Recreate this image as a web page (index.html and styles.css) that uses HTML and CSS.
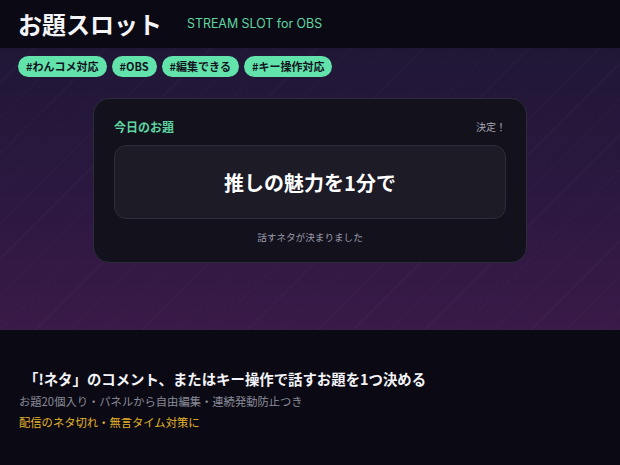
FILE: index.html
```html
<!DOCTYPE html>
<html lang="ja">
<head>
<meta charset="utf-8">
<link rel="stylesheet" href="styles.css">
</head>
<body>
<header class="top">
  <h1 class="title">お題スロット</h1>
  <span class="sub">STREAM SLOT for OBS</span>
</header>
<section class="stage">
  <div class="tags">
    <span class="tag">#わんコメ対応</span>
    <span class="tag">#OBS</span>
    <span class="tag">#編集できる</span>
    <span class="tag">#キー操作対応</span>
  </div>
  <div class="card">
    <div class="card-head">
      <span class="label">今日のお題</span>
      <span class="status">決定！</span>
    </div>
    <div class="result">推しの魅力を1分で</div>
    <div class="note">話すネタが決まりました</div>
  </div>
</section>
<section class="info">
  <h2 class="lead">「!ネタ」のコメント、またはキー操作で話すお題を1つ決める</h2>
  <p class="desc">お題20個入り・パネルから自由編集・連続発動防止つき</p>
  <p class="accent">配信のネタ切れ・無言タイム対策に</p>
</section>
</body>
</html>
```

FILE: styles.css
```css
* { box-sizing: border-box; }
html, body {
  margin: 0;
  padding: 0;
  width: 620px;
  height: 465px;
  overflow: hidden;
  background: #0b0a14;
  font-family: "Noto Sans CJK JP", "Noto Sans", sans-serif;
  color: #fff;
}
.top {
  height: 48px;
  display: flex;
  align-items: center;
  padding: 0 18px;
  background: #0b0a14;
}
.title {
  margin: 0;
  font-size: 24px;
  font-weight: 700;
  line-height: 1;
  color: #f4f4f8;
}
.sub {
  margin-left: 25px;
  font-family: "Inter", "Noto Sans", sans-serif;
  font-size: 12.4px;
  color: #5fd6a2;
  margin-top: -2px;
}
.stage {
  height: 282px;
  background:
    repeating-linear-gradient(135deg, rgba(255,255,255,0) 0 24px, rgba(255,255,255,0.022) 24px 25px),
    linear-gradient(180deg, #201736 0%, #2b1840 50%, #3a1a48 100%);
  padding-top: 8px;
}
.tags {
  display: flex;
  gap: 5px;
  padding-left: 18px;
}
.tag {
  height: 21px;
  padding: 0 8px;
  border-radius: 11px;
  background: #62e3ab;
  color: #14141e;
  font-size: 11px;
  font-weight: 700;
  line-height: 21px;
}
.card {
  margin: 21px auto 0;
  width: 434px;
  height: 165px;
  border-radius: 16px;
  background: #13121c;
  border: 1px solid #2c2c3c;
  padding: 20px 20px 0;
}
.card-head {
  display: flex;
  justify-content: space-between;
  align-items: center;
  height: 14px;
}
.label {
  font-size: 12px;
  font-weight: 700;
  color: #5fd6a2;
}
.status {
  font-size: 10px;
  color: #a8a8b8;
}
.result {
  margin-top: 12px;
  height: 74px;
  border-radius: 12px;
  background: #1c1b26;
  border: 1px solid #2c2c3a;
  display: flex;
  align-items: center;
  justify-content: center;
  font-size: 20px;
  font-weight: 700;
  color: #fff;
}
.note {
  margin-top: 11px;
  text-align: center;
  font-size: 9.6px;
  color: #9a9aac;
}
.info {
  padding: 38px 18px 0 19px;
}
.lead {
  margin: 0 0 0 5px;
  font-size: 14.4px;
  font-weight: 700;
  color: #f4f4f8;
  line-height: 22px;
}
.desc {
  margin: 2px 0 0;
  font-size: 11.3px;
  color: #8a8a98;
  line-height: 18px;
}
.accent {
  margin: 3px 0 0;
  font-size: 11.3px;
  color: #e4b52a;
  line-height: 18px;
}
```
